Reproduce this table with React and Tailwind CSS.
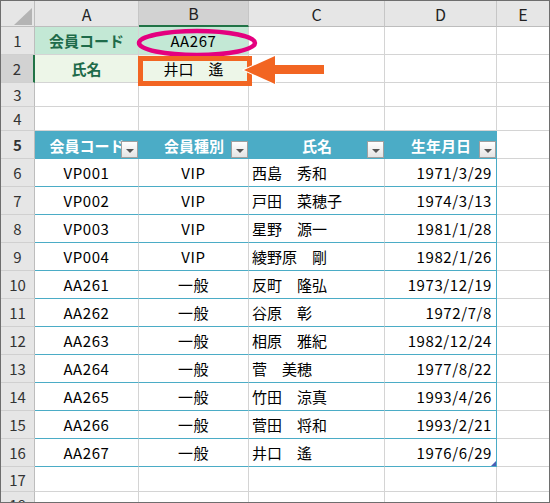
const rows = [
  ["VP001", "VIP", "西島　秀和", "1971/3/29"],
  ["VP002", "VIP", "戸田　菜穂子", "1974/3/13"],
  ["VP003", "VIP", "星野　源一", "1981/1/28"],
  ["VP004", "VIP", "綾野原　剛", "1982/1/26"],
  ["AA261", "一般", "反町　隆弘", "1973/12/19"],
  ["AA262", "一般", "谷原　彰", "1972/7/8"],
  ["AA263", "一般", "相原　雅紀", "1982/12/24"],
  ["AA264", "一般", "菅　美穂", "1977/8/22"],
  ["AA265", "一般", "竹田　涼真", "1993/4/26"],
  ["AA266", "一般", "菅田　将和", "1993/2/21"],
  ["AA267", "一般", "井口　遙", "1976/6/29"],
];

function RowHead({ n, h, active }) {
  return (
    <div
      className={
        "w-[34px] shrink-0 flex items-center justify-center text-[15px] text-[#333] border-b border-[#d0d0d0] " +
        (active ? "bg-[#d2d2d2] border-r-2 border-r-[#217346]" : "bg-[#e6e6e6] border-r border-r-[#bdbdbd]")
      }
      style={{ height: h }}
    >
      {n}
    </div>
  );
}

function Filter() {
  return (
    <div className="absolute right-[1px] bottom-[1px] w-[17px] h-[17px] border border-[#a0a0a0] bg-gradient-to-b from-white to-[#e4e4e4] flex items-center justify-center">
      <div className="w-0 h-0 border-l-[4px] border-r-[4px] border-t-[4px] border-l-transparent border-r-transparent border-t-[#555] mt-[2px]" />
    </div>
  );
}

function EmptyRow({ n, h }) {
  return (
    <div className="flex">
      <RowHead n={n} h={h} />
      <div className="w-[104px] border-r border-b border-[#d4d4d4]" style={{ height: h }} />
      <div className="w-[110px] border-r border-b border-[#d4d4d4]" style={{ height: h }} />
      <div className="w-[136px] border-r border-b border-[#d4d4d4]" style={{ height: h }} />
      <div className="w-[112px] border-r border-b border-[#d4d4d4]" style={{ height: h }} />
      <div className="flex-1 border-b border-[#d4d4d4]" style={{ height: h }} />
    </div>
  );
}

export default function App() {
  return (
    <div className="relative w-[550px] h-[503px] overflow-hidden bg-white border border-[#6e6e6e] font-['Noto_Sans_CJK_JP',sans-serif] leading-none text-black">
      {/* column headers */}
      <div className="flex h-[26px] text-[16px] text-[#222]">
        <div className="relative w-[34px] bg-[#e6e6e6] border-r border-b border-[#bdbdbd]">
          <svg className="absolute left-[13px] top-[7px]" width="18" height="17" viewBox="0 0 18 17">
            <polygon points="18,0 18,17 0,17" fill="#b4b4b4" />
          </svg>
        </div>
        <div className="w-[104px] bg-[#e6e6e6] border-r border-b border-[#c6c6c6] border-b-[#bdbdbd] flex items-center justify-center">A</div>
        <div className="w-[110px] bg-[#d2d2d2] border-r border-[#c6c6c6] border-b-2 border-b-[#217346] flex items-center justify-center">B</div>
        <div className="w-[136px] bg-[#e6e6e6] border-r border-b border-[#c6c6c6] border-b-[#bdbdbd] flex items-center justify-center">C</div>
        <div className="w-[112px] bg-[#e6e6e6] border-r border-b border-[#c6c6c6] border-b-[#bdbdbd] flex items-center justify-center">D</div>
        <div className="flex-1 bg-[#e6e6e6] border-b border-[#bdbdbd] flex items-center justify-center">E</div>
      </div>

      {/* row 1 */}
      <div className="flex text-[15px]">
        <RowHead n={1} h={28} />
        <div className="w-[104px] h-[28px] bg-[#c3e8d5] border-r border-b border-[#d4d4d4] flex items-center justify-center font-bold text-[#1e6b4a]">会員コード</div>
        <div className="w-[110px] h-[28px] bg-[#c3e8d5] border-r border-b border-[#d4d4d4] flex items-center justify-center tracking-[0.6px]">AA267</div>
        <div className="w-[136px] h-[28px] border-r border-b border-[#d4d4d4]" />
        <div className="w-[112px] h-[28px] border-r border-b border-[#d4d4d4]" />
        <div className="flex-1 h-[28px] border-b border-[#d4d4d4]" />
      </div>

      {/* row 2 */}
      <div className="flex text-[15px]">
        <RowHead n={2} h={28} active />
        <div className="w-[104px] h-[28px] bg-[#edf6e8] border-r border-b border-[#d4d4d4] flex items-center justify-center font-bold text-[#1e6b4a]">氏名</div>
        <div className="w-[110px] h-[28px] bg-[#edf6e8] border-r border-b border-[#d4d4d4] flex items-center justify-center">井口　遙</div>
        <div className="w-[136px] h-[28px] border-r border-b border-[#d4d4d4]" />
        <div className="w-[112px] h-[28px] border-r border-b border-[#d4d4d4]" />
        <div className="flex-1 h-[28px] border-b border-[#d4d4d4]" />
      </div>

      <EmptyRow n={3} h={24} />
      <EmptyRow n={4} h={24} />

      {/* row 5: table header */}
      <div className="flex text-[15px] font-bold text-white">
        <RowHead n={5} h={28} />
        <div className="relative w-[104px] h-[28px] bg-[#4bacc6] flex items-center justify-center">
          会員コード
          <Filter />
        </div>
        <div className="relative w-[110px] h-[28px] bg-[#4bacc6] flex items-center justify-center">
          会員種別
          <Filter />
        </div>
        <div className="relative w-[136px] h-[28px] bg-[#4bacc6] flex items-center justify-center">
          氏名
          <Filter />
        </div>
        <div className="relative w-[112px] h-[28px] bg-[#4bacc6] flex items-center justify-center">
          生年月日
          <Filter />
        </div>
        <div className="flex-1 h-[28px] border-b border-[#d4d4d4]" />
      </div>

      {rows.map((r, i) => (
        <div key={r[0]} className="flex text-[15px]">
          <RowHead n={i + 6} h={28} />
          <div className="w-[104px] h-[28px] border-r border-r-[#d4d4d4] border-b border-b-[#4bacc6] flex items-center justify-center tracking-[0.6px]">{r[0]}</div>
          <div className="w-[110px] h-[28px] border-r border-r-[#d4d4d4] border-b border-b-[#4bacc6] flex items-center justify-center tracking-[0.6px]">{r[1]}</div>
          <div className="w-[136px] h-[28px] border-r border-r-[#d4d4d4] border-b border-b-[#4bacc6] flex items-center pl-[3px]">{r[2]}</div>
          <div className="relative w-[112px] h-[28px] border-r border-r-[#4bacc6] border-b border-b-[#4bacc6] flex items-center justify-end pr-[4px] tracking-[0.6px]">
            {r[3]}
            {i === rows.length - 1 && (
              <svg className="absolute right-0 bottom-0" width="5" height="5" viewBox="0 0 5 5">
                <polygon points="5,0 5,5 0,5" fill="#4a5fb5" />
              </svg>
            )}
          </div>
          <div className="flex-1 h-[28px] border-b border-[#d4d4d4]" />
        </div>
      ))}

      <EmptyRow n={17} h={25} />
      <EmptyRow n={18} h={25} />

      {/* annotations */}
      <svg className="absolute left-0 top-0 pointer-events-none" width="550" height="503" viewBox="-1 -1 550 503">
        <ellipse cx="195" cy="41" rx="58" ry="12" fill="none" stroke="#e4007f" strokeWidth="4.5" />
        <rect x="138.5" y="56.5" width="109" height="25" fill="none" stroke="#f26522" strokeWidth="5" />
        <polygon points="242,68 273,54 273,63 322,63 322,72 273,72 273,82" fill="#f26522" stroke="white" strokeWidth="2" />
        <polygon points="242,68 273,54 273,63 322,63 322,72 273,72 273,82" fill="#f26522" />
      </svg>
    </div>
  );
}
